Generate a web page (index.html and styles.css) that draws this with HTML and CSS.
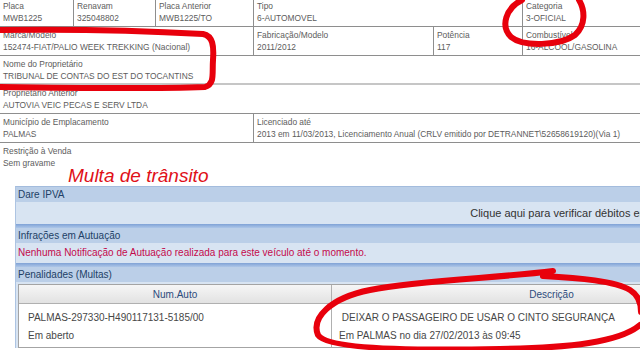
FILE: index.html
```html
<!DOCTYPE html>
<html lang="pt-BR">
<head>
    <meta charset="UTF-8">
    <meta name="viewport" content="width=device-width, initial-scale=1.0">
    <title>Consulta de Veículo</title>
    <link rel="stylesheet" href="styles.css">
</head>
<body>

<div class="sheet">
    <div class="row r1">
        <div class="cell"><div>Placa</div><div>MWB1225</div></div>
        <div class="cell"><div>Renavam</div><div>325048802</div></div>
        <div class="cell"><div>Placa Anterior</div><div>MWB1225/TO</div></div>
        <div class="cell"><div>Tipo</div><div>6-AUTOMOVEL</div></div>
        <div class="cell"><div>Categoria</div><div>3-OFICIAL</div></div>
    </div>
    <div class="row r2">
        <div class="cell"><div>Marca/Modelo</div><div>152474-FIAT/PALIO WEEK TREKKING (Nacional)</div></div>
        <div class="cell"><div>Fabricação/Modelo</div><div>2011/2012</div></div>
        <div class="cell"><div>Potência</div><div>117</div></div>
        <div class="cell"><div>Combustível</div><div>16-ALCOOL/GASOLINA</div></div>
    </div>
    <div class="row light">
        <div class="cell short"><div>Nome do Proprietário</div><div>TRIBUNAL DE CONTAS DO EST DO TOCANTINS</div></div>
    </div>
    <div class="row">
        <div class="cell"><div>Proprietário Anterior</div><div>AUTOVIA VEIC PECAS E SERV LTDA</div></div>
    </div>
    <div class="row r5">
        <div class="cell"><div>Município de Emplacamento</div><div>PALMAS</div></div>
        <div class="cell"><div>Licenciado até</div><div>2013 em 11/03/2013, Licenciamento Anual (CRLV emitido por DETRANNET\52658619120)(Via 1)</div></div>
    </div>
    <div class="row last">
        <div class="cell"><div>Restrição à Venda</div><div>Sem gravame</div></div>
    </div>
</div>

<h2 class="note">Multa de trânsito</h2>

<div class="panel">
    <div class="panel-head">Dare IPVA</div>
    <div class="panel-body link-row">Clique aqui para verificar débitos em aberto</div>
    <div class="stripe"></div>

    <div class="panel-head">Infrações em Autuação</div>
    <div class="panel-body notice">Nenhuma Notificação de Autuação realizada para este veículo até o momento.</div>
    <div class="stripe"></div>

    <div class="panel-head">Penalidades (Multas)</div>
    <div class="fines">
        <div class="fines-grid">
            <div class="fines-th">Num.Auto</div>
            <div class="fines-th">Descrição</div>
            <div class="fines-td">
                <div>PALMAS-297330-H490117131-5185/00</div>
                <div>Em aberto</div>
            </div>
            <div class="fines-td desc">
                <div>&nbsp;DEIXAR O PASSAGEIRO DE USAR O CINTO SEGURANÇA</div>
                <div>Em PALMAS no dia 27/02/2013 às 09:45</div>
            </div>
        </div>
    </div>
</div>

<!-- marcações à mão por cima do print -->
<svg class="marks" width="640" height="350" viewBox="0 0 640 350">
    <path d="M0,30 C70,29 150,31 203,34 C213,36 214,46 213,60 C212,74 215,84 205,87 C150,89 70,88 0,87" />
    <path d="M522,0 C506,8 500,26 511,37 C523,47 560,46 575,35 C586,25 585,10 579,0" />
    <path d="M553,271 C500,278 420,280 370,290 C330,298 311,318 318,335 C326,348 400,351 500,349 C570,348 620,342 640,325" />
    <path d="M543,276 C580,278 615,281 630,290 C640,296 641,305 641,312" />
</svg>

</body>
</html>
```

FILE: styles.css
```css
* {
    box-sizing: border-box;
}
body {
    margin: 0;
    width: 640px;
    height: 350px;
    overflow: hidden;
    position: relative;
    font-family: "Liberation Sans", Arial, sans-serif;
    background: #fff;
}
.sheet {
    margin-top: -2px;
    font-size: 8.4px;
    line-height: 11.5px;
    color: #5c5c5c;
}
.row {
    display: grid;
    border-bottom: 1px solid #8e8e8e;
}
.row.light {
    border-bottom: 2px solid #c6c6c6;
}
.row.last {
    border-bottom: none;
}
.r1 {
    grid-template-columns: 73px 82px 98px 269px 1fr;
}
.r2 {
    grid-template-columns: 253px 180px 89px 1fr;
}
.r5 {
    grid-template-columns: 253px 1fr;
}
.cell {
    padding: 3px 3px 2px;
    white-space: nowrap;
}
.cell.short {
    padding-bottom: 1px;
}
.cell + .cell {
    border-left: 1px solid #8e8e8e;
}
.note {
    margin: -5px 0 0 68px;
    font-size: 19px;
    line-height: 20px;
    font-weight: normal;
    font-style: italic;
    color: #e01018;
}
.panel {
    margin-left: 15px;
    width: 760px;
    background: #d8e4f2;
    border-top: 1px solid #a3bcdd;
    border-left: 1px solid #adc4e2;
    font-size: 10px;
}
.panel-head {
    height: 15px;
    line-height: 15px;
    padding-left: 2px;
    background: #bbcfe8;
    color: #223f66;
}
.panel-body {
    padding-left: 2px;
}
.link-row {
    height: 22px;
    line-height: 22px;
    font-size: 11px;
    color: #333;
    text-align: right;
    padding-right: 92px;
}
.notice {
    height: 20px;
    line-height: 20px;
    color: #c40a4c;
}
.stripe {
    height: 4px;
    background: linear-gradient(#7fa2d6, #adc6e8);
}
.fines {
    padding: 2px 3px 0 2px;
}
.fines-grid {
    display: grid;
    grid-template-columns: 312px 1fr;
    background: #fff;
    border: 1px solid #a4a4a4;
    color: #474747;
}
.fines-th {
    height: 19px;
    line-height: 19px;
    text-align: center;
    color: #2c4b7c;
    background: linear-gradient(#f6f6f6, #e2e2e2);
    border-bottom: 1px solid #b0b0b0;
}
.fines-th + .fines-th,
.fines-td.desc {
    border-left: 1px solid #b0b0b0;
}
.fines-td {
    padding: 5px 9px 2px;
    line-height: 18px;
}
.fines-td.desc {
    padding-left: 7px;
}
.marks {
    position: absolute;
    top: 0;
    left: 0;
    pointer-events: none;
}
.marks path {
    fill: none;
    stroke: #e8000c;
    stroke-width: 6;
    stroke-linecap: round;
}
```
